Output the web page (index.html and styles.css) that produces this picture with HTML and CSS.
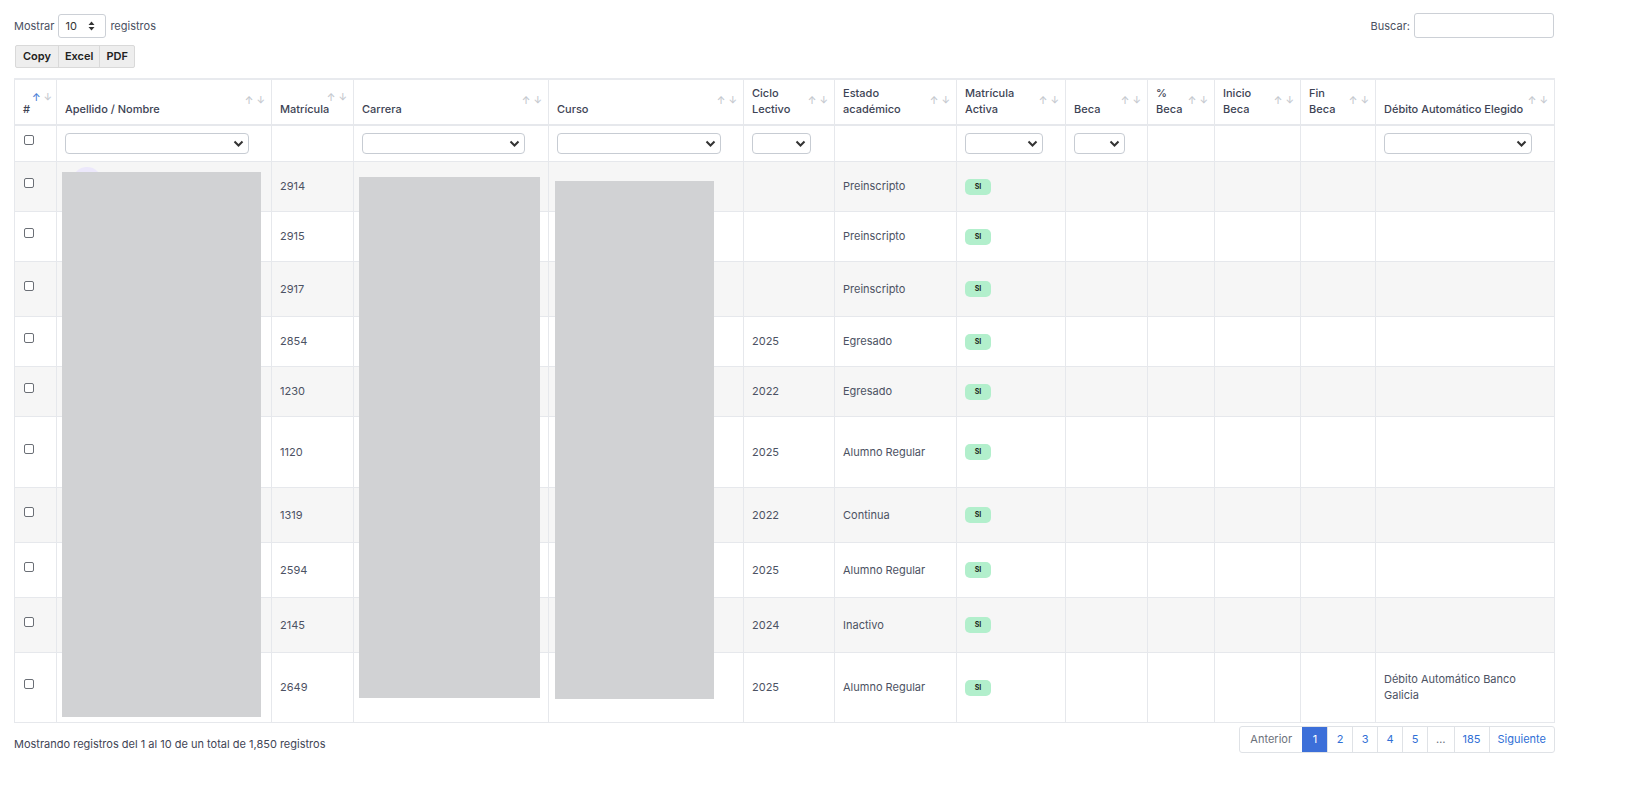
FILE: index.html
```html
<!DOCTYPE html>
<html lang="es">
<head>
<meta charset="utf-8">
<title>Alumnos</title>
<link rel="stylesheet" href="styles.css">
</head>
<body>
<div class="page">
  <div class="toolbar">
    <div class="length">
      <span>Mostrar</span>
      <div class="len-select"><span>10</span>
        <svg width="7" height="10" viewBox="0 0 7 10"><path d="M3.5 0.5L6.5 4H0.5z M3.5 9.5L0.5 6H6.5z" fill="#333"/></svg>
      </div>
      <span>registros</span>
    </div>
    <div class="search">
      <span>Buscar:</span>
      <div class="search-input"></div>
    </div>
  </div>
  <div class="buttons">
    <span class="btn">Copy</span><span class="btn">Excel</span><span class="btn">PDF</span>
  </div>

  <div class="table-wrap">
    <table class="grid">
      <colgroup>
        <col class="c1"><col class="c2"><col class="c3"><col class="c4"><col class="c5"><col class="c6"><col class="c7"><col class="c8"><col class="c9"><col class="c10"><col class="c11"><col class="c12"><col class="c13">
      </colgroup>
      <thead>
        <tr class="head">
          <th class="hash">#<span class="sort"><i class="on">↑</i><i>↓</i></span></th>
          <th>Apellido / Nombre<span class="sort"><i>↑</i><i>↓</i></span></th>
          <th>Matrícula<span class="sort hi"><i>↑</i><i>↓</i></span></th>
          <th>Carrera<span class="sort"><i>↑</i><i>↓</i></span></th>
          <th>Curso<span class="sort"><i>↑</i><i>↓</i></span></th>
          <th>Ciclo<br>Lectivo<span class="sort"><i>↑</i><i>↓</i></span></th>
          <th>Estado<br>académico<span class="sort"><i>↑</i><i>↓</i></span></th>
          <th>Matrícula<br>Activa<span class="sort"><i>↑</i><i>↓</i></span></th>
          <th>Beca<span class="sort"><i>↑</i><i>↓</i></span></th>
          <th>%<br>Beca<span class="sort"><i>↑</i><i>↓</i></span></th>
          <th>Inicio<br>Beca<span class="sort"><i>↑</i><i>↓</i></span></th>
          <th>Fin<br>Beca<span class="sort"><i>↑</i><i>↓</i></span></th>
          <th>Débito Automático Elegido<span class="sort"><i>↑</i><i>↓</i></span></th>
        </tr>
        <tr class="filters">
          <td><span class="cb"></span></td>
          <td><div class="fsel w183"><svg width="11" height="7" viewBox="0 0 11 7"><path d="M1.5 1.5l4 4 4-4" fill="none" stroke="#333" stroke-width="2"/></svg></div></td>
          <td></td>
          <td><div class="fsel w162"><svg width="11" height="7" viewBox="0 0 11 7"><path d="M1.5 1.5l4 4 4-4" fill="none" stroke="#333" stroke-width="2"/></svg></div></td>
          <td><div class="fsel w163"><svg width="11" height="7" viewBox="0 0 11 7"><path d="M1.5 1.5l4 4 4-4" fill="none" stroke="#333" stroke-width="2"/></svg></div></td>
          <td><div class="fsel w58"><svg width="11" height="7" viewBox="0 0 11 7"><path d="M1.5 1.5l4 4 4-4" fill="none" stroke="#333" stroke-width="2"/></svg></div></td>
          <td></td>
          <td><div class="fsel w77"><svg width="11" height="7" viewBox="0 0 11 7"><path d="M1.5 1.5l4 4 4-4" fill="none" stroke="#333" stroke-width="2"/></svg></div></td>
          <td><div class="fsel w50"><svg width="11" height="7" viewBox="0 0 11 7"><path d="M1.5 1.5l4 4 4-4" fill="none" stroke="#333" stroke-width="2"/></svg></div></td>
          <td></td><td></td><td></td>
          <td><div class="fsel w147"><svg width="11" height="7" viewBox="0 0 11 7"><path d="M1.5 1.5l4 4 4-4" fill="none" stroke="#333" stroke-width="2"/></svg></div></td>
        </tr>
      </thead>
      <tbody>
        <tr class="odd h50"><td><span class="cb"></span></td><td></td><td>2914</td><td></td><td></td><td></td><td>Preinscripto</td><td><span class="badge">SI</span></td><td></td><td></td><td></td><td></td><td></td></tr>
        <tr class="h50"><td><span class="cb"></span></td><td></td><td>2915</td><td></td><td></td><td></td><td>Preinscripto</td><td><span class="badge">SI</span></td><td></td><td></td><td></td><td></td><td></td></tr>
        <tr class="odd h55"><td><span class="cb"></span></td><td></td><td>2917</td><td></td><td></td><td></td><td>Preinscripto</td><td><span class="badge">SI</span></td><td></td><td></td><td></td><td></td><td></td></tr>
        <tr class="h50"><td><span class="cb"></span></td><td></td><td>2854</td><td></td><td></td><td>2025</td><td>Egresado</td><td><span class="badge">SI</span></td><td></td><td></td><td></td><td></td><td></td></tr>
        <tr class="odd h50"><td><span class="cb"></span></td><td></td><td>1230</td><td></td><td></td><td>2022</td><td>Egresado</td><td><span class="badge">SI</span></td><td></td><td></td><td></td><td></td><td></td></tr>
        <tr class="h71"><td><span class="cb"></span></td><td></td><td>1120</td><td></td><td></td><td>2025</td><td>Alumno Regular</td><td><span class="badge">SI</span></td><td></td><td></td><td></td><td></td><td></td></tr>
        <tr class="odd h55"><td><span class="cb"></span></td><td></td><td>1319</td><td></td><td></td><td>2022</td><td>Continua</td><td><span class="badge">SI</span></td><td></td><td></td><td></td><td></td><td></td></tr>
        <tr class="h55"><td><span class="cb"></span></td><td></td><td>2594</td><td></td><td></td><td>2025</td><td>Alumno Regular</td><td><span class="badge">SI</span></td><td></td><td></td><td></td><td></td><td></td></tr>
        <tr class="odd h55"><td><span class="cb"></span></td><td></td><td>2145</td><td></td><td></td><td>2024</td><td>Inactivo</td><td><span class="badge">SI</span></td><td></td><td></td><td></td><td></td><td></td></tr>
        <tr class="h70"><td><span class="cb"></span></td><td></td><td>2649</td><td></td><td></td><td>2025</td><td>Alumno Regular</td><td><span class="badge">SI</span></td><td></td><td></td><td></td><td></td><td>Débito Automático Banco Galicia</td></tr>
      </tbody>
    </table>
    <div class="avatar"></div>
    <div class="redact r1"></div>
    <div class="redact r2"></div>
    <div class="redact r3"></div>
  </div>

  <div class="footer">
    <div class="info">Mostrando registros del 1 al 10 de un total de 1,850 registros</div>
    <div class="pager">
      <span class="pg disabled">Anterior</span>
      <span class="pg active">1</span>
      <span class="pg">2</span>
      <span class="pg">3</span>
      <span class="pg">4</span>
      <span class="pg">5</span>
      <span class="pg dots">…</span>
      <span class="pg">185</span>
      <span class="pg">Siguiente</span>
    </div>
  </div>
</div>
</body>
</html>
```
FILE: styles.css
```css
* { box-sizing: border-box; }
html, body { margin: 0; padding: 0; background: #fff; }
body {
  font-family: Inter, "Noto Sans", "DejaVu Sans", sans-serif;
  font-size: 11px;
  color: #4a5061;
}
.page {
  width: 1554px;
  padding: 13px 0 0 14px;
}
.toolbar {
  display: flex;
  justify-content: space-between;
  align-items: center;
  height: 25px;
}
.length, .search {
  display: flex;
  align-items: center;
  gap: 4px;
}
.len-select {
  width: 48px;
  height: 24px;
  border: 1px solid #ccd0d6;
  border-radius: 3px;
  display: flex;
  align-items: center;
  justify-content: space-between;
  padding: 0 10px 0 6px;
  color: #333;
}
.search-input {
  width: 140px;
  height: 25px;
  border: 1px solid #ccd0d6;
  border-radius: 3px;
}
.buttons {
  display: flex;
  margin-top: 7px;
}
.btn {
  height: 23px;
  line-height: 21px;
  padding: 0 6px;
  background: #eeeeee;
  border: 1px solid #d9d9d9;
  margin-left: -1px;
  font-weight: 600;
  color: #222;
}
.btn:first-child { margin-left: 1px; border-radius: 2px 0 0 2px; padding: 0 7px; }
.btn:last-child { border-radius: 0 2px 2px 0; }

.table-wrap {
  position: relative;
  margin-top: 10px;
  width: 1540px;
}
.grid {
  width: 1540px;
  table-layout: fixed;
  border-collapse: collapse;
  border-top: 2px solid #e8eaee;
}
.c1 { width: 42px; } .c2 { width: 215px; } .c3 { width: 82px; } .c4 { width: 195px; }
.c5 { width: 195px; } .c6 { width: 91px; } .c7 { width: 122px; } .c8 { width: 109px; }
.c9 { width: 82px; } .c10 { width: 67px; } .c11 { width: 86px; } .c12 { width: 75px; }
.c13 { width: 179px; }
.grid th, .grid td {
  border: 1px solid #e6e8ec;
  padding: 0 8px;
  text-align: left;
}
.grid th {
  position: relative;
  height: 46px;
  vertical-align: bottom;
  padding-bottom: 7px;
  font-weight: 500;
  line-height: 16px;
  color: #3d4354;
  border-bottom: 2px solid #e6e8ec;
}
.grid th.hash { padding-left: 8px; }
.sort {
  position: absolute;
  right: 6px;
  top: 14px;
  display: flex;
  gap: 3px;
  font-size: 10px;
  line-height: 12px;
}
.sort.hi { top: 11px; }
.hash .sort { right: auto; left: 17px; top: 11px; }
.sort i { font-style: normal; color: #c4c8ce; }
.sort i.on { color: #4b7fd6; }

.filters td { height: 36px; vertical-align: middle; }
.fsel {
  height: 21px;
  border: 1px solid #c7ccd3;
  border-radius: 4px;
  display: flex;
  align-items: center;
  justify-content: flex-end;
  padding-right: 4px;
  background: #fff;
}
.w183 { width: 184px; } .w162 { width: 163px; } .w163 { width: 164px; }
.w58 { width: 59px; } .w77 { width: 78px; } .w50 { width: 51px; } .w147 { width: 148px; }
.cb {
  display: block;
  width: 10px;
  height: 10px;
  border: 1px solid #6b6f76;
  border-radius: 2px;
  background: #fff;
  margin-left: 1px;
}
.filters .cb { margin-top: -6px; }
tbody td { vertical-align: middle; line-height: 16px; color: #4c5263; }
tbody td:first-child .cb { margin-top: -6px; }
tbody tr.odd td { background: #f6f6f6; }
.h50 td { height: 50px; } .h55 td { height: 55px; } .h70 td { height: 70px; } .h71 td { height: 71px; }
.badge {
  display: inline-block;
  width: 26px;
  height: 16px;
  line-height: 16px;
  border-radius: 5px;
  background: #b2efcc;
  color: #1d2a22;
  font-size: 7px;
  font-weight: 700;
  text-align: center;
  vertical-align: middle;
}

.redact { position: absolute; background: #d1d2d4; }
.r1 { left: 48px; top: 94px; width: 199px; height: 545px; }
.r2 { left: 345px; top: 99px; width: 181px; height: 521px; }
.r3 { left: 541px; top: 103px; width: 159px; height: 518px; }
.avatar {
  position: absolute;
  left: 58px; top: 89px;
  width: 30px; height: 30px;
  border-radius: 50%;
  background: #ece8fb;
}

.footer {
  width: 1540px;
  display: flex;
  justify-content: space-between;
  align-items: flex-start;
  margin-top: 3px;
}
.info { margin-top: 11px; color: #3f4555; }
.pager {
  display: flex;
  border: 1px solid #dfe2e6;
  border-radius: 3px;
  height: 27px;
  margin-right: -1px;
}
.pg {
  display: flex;
  align-items: center;
  justify-content: center;
  min-width: 25px;
  padding: 0 8px;
  border-left: 1px solid #dfe2e6;
  color: #2f6fd6;
}
.pg:first-child { border-left: 0; }
.pg.disabled { color: #6c717b; padding: 0 10px; }
.pg.active { background: #3c6fd9; color: #fff; border-color: #3c6fd9; }
.pg.dots { color: #6c717b; }
```
